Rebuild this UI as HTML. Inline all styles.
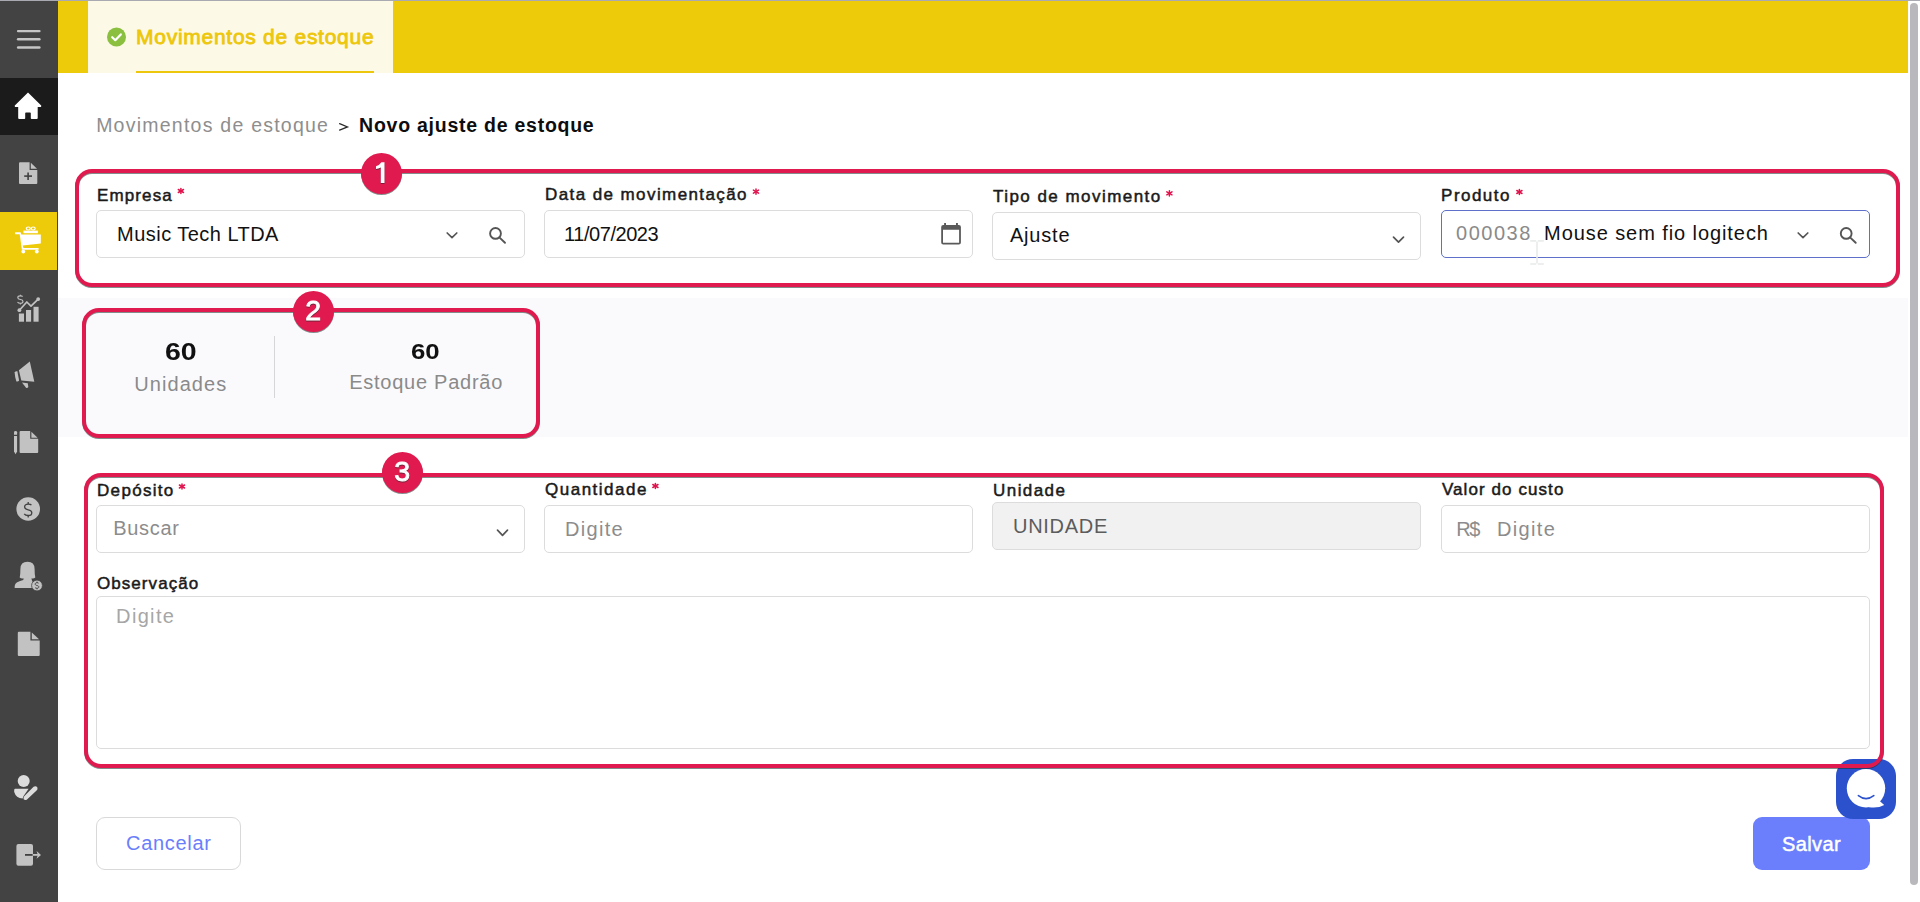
<!DOCTYPE html>
<html><head><meta charset="utf-8"><title>Novo ajuste de estoque</title>
<style>
html,body{margin:0;padding:0;width:1920px;height:902px;overflow:hidden;background:#fff;font-family:"Liberation Sans",sans-serif;}
.a{position:absolute;box-sizing:border-box;}
.t{position:absolute;white-space:nowrap;line-height:1;}
#topline{left:0;top:0;width:1920px;height:1px;background:#a9a9b1;}
#side{left:0;top:1px;width:58px;height:901px;background:#434343;}
#homebg{left:0;top:78px;width:58px;height:57px;background:#1b1b1b;}
#cartbg{left:0;top:212px;width:57px;height:58px;background:#eecb0a;}
#ybar{left:58px;top:1px;width:1850px;height:72px;background:#eecb0a;}
#tabbg{left:88px;top:1px;width:305px;height:72px;background:#fdf9e7;}
#tabline{left:136px;top:71px;width:238px;height:2px;background:#edc70b;}
#band{left:58px;top:298px;width:1850px;height:139px;background:#fafafd;}
.inp{position:absolute;box-sizing:border-box;border:1px solid #dcdcdc;border-radius:5px;background:#fff;}
.rbox{position:absolute;box-sizing:border-box;border:4px solid #e01a4f;border-radius:17px;}
.badge{position:absolute;box-sizing:border-box;width:41px;height:41px;border-radius:50%;background:#e01a4f;color:#fff;font-weight:700;font-size:28px;line-height:41px;text-align:center;}
.ann{position:absolute;left:0;top:0;width:1920px;height:902px;filter:drop-shadow(0 1px 0.7px rgba(30,50,45,0.55));}
#btn1{left:96px;top:817px;width:145px;height:53px;border:1px solid #d9d9d9;border-radius:9px;background:#fff;}
#btn2{left:1753px;top:817px;width:117px;height:53px;border-radius:9px;background:#6b7ffd;}
#chat{left:1836px;top:759px;width:60px;height:60px;border-radius:17px;background:#2b52cc;}
#thumb{left:1910px;top:3px;width:8px;height:882px;border-radius:4px;background:#b9b8bd;}
svg{position:absolute;overflow:visible;}

</style></head><body>
<div class="a" id="side"></div>
<div class="a" id="topline"></div>
<div class="a" id="homebg"></div>
<div class="a" id="cartbg"></div>
<div class="a" id="ybar"></div>
<div class="a" id="tabbg"></div>
<div class="a" id="tabline"></div>
<div class="a" id="band"></div>

<!-- sidebar icons -->
<svg style="left:0;top:0" width="58" height="902" viewBox="0 0 58 902">
 <g stroke="#c6c6c6" stroke-width="2.4" stroke-linecap="round">
  <line x1="18.1" y1="31.1" x2="39.4" y2="31.1"/>
  <line x1="18.1" y1="39.3" x2="39.4" y2="39.3"/>
  <line x1="18.1" y1="47.5" x2="39.4" y2="47.5"/>
 </g>
 <!-- home -->
 <path fill="#fff" d="M28 92.6 L41.2 105.4 Q41.6 106.2 40.8 107 L37.7 107 L37.7 118 Q37.7 119 36.7 119 L31.6 119 Q30.8 119 30.8 118.2 L30.8 113.2 Q30.8 112.5 30 112.5 L26 112.5 Q25.2 112.5 25.2 113.2 L25.2 118.2 Q25.2 119 24.4 119 L19.2 119 Q18.2 119 18.2 118 L18.2 107 L15.2 107 Q14.4 106.2 14.8 105.4 Z"/>
 <!-- doc plus -->
 <path fill="#c2c2c2" d="M20 162.3 L29.6 162.3 L29.6 169.9 L37.3 169.9 L37.3 183 Q37.3 184 36.3 184 L20 184 Q19 184 19 183 L19 163.3 Q19 162.3 20 162.3 Z"/>
 <path fill="#c2c2c2" d="M30.8 162.8 L37 168.8 L30.8 168.8 Z"/>
 <g stroke="#404040" stroke-width="1.6"><line x1="24.2" y1="176.1" x2="32" y2="176.1"/><line x1="28.1" y1="172.4" x2="28.1" y2="179.9"/></g>
 <!-- cart -->
 <g fill="#fff">
  <path d="M15.3 232.2 L20.6 232.2 L21.2 234.4 L40.8 234.4 L40.8 243.5 L22.7 245.6 L23.4 248 L38.6 248 L38.6 249.8 L21.9 249.8 L19.7 234.3 L15.3 234.2 Q14.6 233.2 15.3 232.2 Z"/>
  <rect x="23.5" y="230.6" width="14.4" height="2.6"/>
  <circle cx="23.3" cy="251.6" r="1.9"/><circle cx="36.8" cy="251.6" r="1.9"/>
 </g>
 <g fill="none" stroke="#fff" stroke-width="1.2"><ellipse cx="28.3" cy="228.5" rx="2" ry="1.5"/><ellipse cx="33.2" cy="228.5" rx="2" ry="1.5"/></g>
 <!-- chart -->
 <g fill="#c2c2c2">
  <rect x="18.9" y="313.5" width="5.1" height="8.2"/>
  <rect x="26" y="310" width="5.1" height="11.7"/>
  <rect x="33.5" y="306.8" width="5.1" height="14.9"/>
  <circle cx="19.4" cy="310.2" r="1.9"/><circle cx="38.2" cy="299.1" r="1.9"/>
 </g>
 <polyline points="19.4,310.2 26.8,302 31,306.2 38.2,299.1" fill="none" stroke="#c2c2c2" stroke-width="1.7" stroke-linejoin="round"/>
 <g fill="none" stroke="#c2c2c2" stroke-width="1.1" stroke-linecap="butt"><path d="M22.74 296.50 C22.22 295.85 21.70 295.85 20.40 295.85 C18.58 295.85 17.80 296.68 17.80 297.70 C17.80 298.90 18.84 299.27 20.40 299.55 C21.96 299.83 23.00 300.29 23.00 301.40 C23.00 302.51 22.22 303.25 20.40 303.25 C18.84 303.25 18.06 302.88 17.54 302.14"/><line x1="20.4" y1="294.65" x2="20.4" y2="295.85"/><line x1="20.4" y1="303.25" x2="20.4" y2="304.45"/></g>
 <!-- megaphone -->
 <g fill="#c2c2c2">
  <path d="M18.9 370.3 L29.8 361.6 L34.3 381.8 L21.3 380.4 Z"/>
  <path d="M14.6 372.6 Q15.4 370.8 17.4 371.2 L19.1 380.4 Q18.2 382 16.4 381.4 Q14.8 377 14.6 372.6 Z"/>
  <path d="M22 382.4 L27.8 383.2 L28.3 387 Q27.4 388.6 26 387.8 Z"/>
 </g>
 <!-- doc pencil -->
 <g fill="#c2c2c2">
  <path d="M20.6 431.1 L30.2 431.1 L30.2 438.8 L38.2 438.8 L38.2 452 Q38.2 453 37.2 453 L20.6 453 Q19.6 453 19.6 452 L19.6 432.1 Q19.6 431.1 20.6 431.1 Z"/>
  <path d="M31.4 431.8 L37.6 437.8 L31.4 437.8 Z"/>
  <path d="M14 432.3 Q14 430.9 15.5 430.9 Q17.1 430.9 17.1 432.3 L17.1 434.8 L14 434.8 Z"/>
  <path d="M14 436 L17.1 436 L17.1 451.5 L15.6 454.3 L14 451.5 Z"/>
 </g>
 <!-- dollar circle -->
 <circle cx="28.2" cy="509" r="11.8" fill="#c2c2c2"/>
 <g fill="none" stroke="#404040" stroke-width="1.3" stroke-linecap="butt"><path d="M31.44 505.10 C30.72 504.10 30.00 504.10 28.20 504.10 C25.68 504.10 24.60 505.38 24.60 506.95 C24.60 508.80 26.04 509.37 28.20 509.80 C30.36 510.23 31.80 510.94 31.80 512.65 C31.80 514.36 30.72 515.50 28.20 515.50 C26.04 515.50 24.96 514.93 24.24 513.79"/><line x1="28.2" y1="502.00" x2="28.2" y2="504.10"/><line x1="28.2" y1="515.50" x2="28.2" y2="517.60"/></g>
 <!-- woman -->
 <g fill="#c2c2c2">
  <path d="M27.5 561.8 Q34.6 561.8 34.6 569 Q34.6 575 35.3 577.6 Q33.6 579 31.5 578.3 L31.8 580 L32.6 582 Q35 583.5 36.5 585 L33.2 588 L14.7 588 Q14.3 584 16.8 582.5 Q20 580.8 23.3 580 L23.6 578.3 Q21.4 579 19.7 577.6 Q20.4 575 20.4 569 Q20.4 561.8 27.5 561.8 Z"/>
  <circle cx="37" cy="585.5" r="5.4" stroke="#404040" stroke-width="0.8"/>
 </g>
 <g fill="none" stroke="#404040" stroke-width="0.9" stroke-linecap="butt"><path d="M38.62 583.19 C38.26 582.70 37.90 582.70 37.00 582.70 C35.74 582.70 35.20 583.33 35.20 584.10 C35.20 585.01 35.92 585.29 37.00 585.50 C38.08 585.71 38.80 586.06 38.80 586.90 C38.80 587.74 38.26 588.30 37.00 588.30 C35.92 588.30 35.38 588.02 35.02 587.46"/><line x1="37" y1="581.60" x2="37" y2="582.70"/><line x1="37" y1="588.30" x2="37" y2="589.40"/></g>
 <!-- doc -->
 <path fill="#c2c2c2" d="M18.8 631.8 L30.4 631.8 L30.4 640.4 L39.7 640.4 L39.7 654.9 Q39.7 655.9 38.7 655.9 L18.8 655.9 Q17.8 655.9 17.8 654.9 L17.8 632.8 Q17.8 631.8 18.8 631.8 Z"/>
 <path fill="#c2c2c2" d="M31.8 632.6 L39 639.2 L31.8 639.2 Z"/>
 <!-- person pencil -->
 <g fill="#dcdcdc">
  <circle cx="23.7" cy="780.9" r="6"/>
  <path d="M15 788.8 L28.6 788.8 L23.6 796 L22.6 798.6 Q16 798 14.2 792 Q14 788.8 15 788.8 Z"/>
  <path d="M33.6 786.8 Q36 785.6 37.4 787.6 Q38 789.4 36.6 790.6 L27 799.4 Q25.4 800.6 23.8 799.6 Q23 798 24.2 796.2 Z"/>
 </g>
 <!-- logout -->
 <rect x="16.4" y="844.1" width="16.6" height="21.7" rx="2" fill="#c2c2c2"/>
 <line x1="25" y1="854.9" x2="32.8" y2="854.9" stroke="#404040" stroke-width="1.8"/>
 <line x1="32.8" y1="854.9" x2="38" y2="854.9" stroke="#c2c2c2" stroke-width="1.8"/>
 <path d="M36.6 851 L41 854.9 L36.6 858.8 L37.8 854.9 Z" fill="#c2c2c2"/>
</svg>

<!-- tab check icon -->
<svg style="left:0;top:0" width="400" height="80">
 <circle cx="116.5" cy="37" r="9.5" fill="#8bbf3f"/>
 <path d="M112.2 37.2 L115.3 40.2 L120.8 34.4" fill="none" stroke="#fff" stroke-width="2.2" stroke-linecap="round" stroke-linejoin="round"/>
</svg>

<!-- inputs -->
<div class="inp" style="left:96px;top:210px;width:429px;height:48px"></div>
<div class="inp" style="left:544px;top:210px;width:429px;height:48px"></div>
<div class="inp" style="left:992px;top:212px;width:429px;height:48px"></div>
<div class="inp" style="left:1441px;top:210px;width:429px;height:48px;border-color:#5e70c9"></div>
<div class="inp" style="left:96px;top:505px;width:429px;height:48px"></div>
<div class="inp" style="left:544px;top:505px;width:429px;height:48px"></div>
<div class="inp" style="left:992px;top:502px;width:429px;height:48px;background:#f1f1f1"></div>
<div class="inp" style="left:1441px;top:505px;width:429px;height:48px"></div>
<div class="inp" style="left:96px;top:596px;width:1774px;height:153px"></div>

<!-- divider -->
<div class="a" style="left:274px;top:336px;width:1px;height:62px;background:#d6d6d8"></div>

<!-- input icons -->
<svg style="left:0;top:0" width="1920" height="902">
 <g fill="none" stroke="#555" stroke-width="1.7" stroke-linecap="round" stroke-linejoin="round">
  <polyline points="447.2,233 452,237.6 456.8,233"/>
  <polyline points="1393.5,237.2 1398.5,242.2 1403.5,237.2"/>
  <polyline points="1798.2,233 1803,237.6 1807.8,233"/>
  <polyline points="497.5,530.2 502.5,535.3 507.5,530.2"/>
 </g>
 <g fill="none" stroke="#555" stroke-width="1.9" stroke-linecap="round">
  <circle cx="495.5" cy="233.4" r="5.4"/><line x1="499.6" y1="237.6" x2="505" y2="242.8"/>
  <circle cx="1846.2" cy="233.4" r="5.4"/><line x1="1850.3" y1="237.6" x2="1855.7" y2="242.8"/>
 </g>
 <!-- calendar -->
 <path fill="#5a5a5a" fill-rule="evenodd" d="M943.2 225 L958.9 225 Q960.9 225 960.9 227 L960.9 242.6 Q960.9 244.6 958.9 244.6 L943.2 244.6 Q941.2 244.6 941.2 242.6 L941.2 227 Q941.2 225 943.2 225 Z M943 229.8 L943 242.8 L959.1 242.8 L959.1 229.8 Z"/>
 <rect x="944.1" y="223" width="1.9" height="2.5" fill="#5a5a5a"/>
 <rect x="956" y="223" width="1.9" height="2.5" fill="#5a5a5a"/>
 <!-- I-beam cursor -->
 <g stroke="#e9ebeb" stroke-width="1.6" fill="none">
  <line x1="1537" y1="241.5" x2="1537" y2="263.5"/>
  <line x1="1530.2" y1="240.9" x2="1536.2" y2="240.9"/><line x1="1537.8" y1="240.9" x2="1543.8" y2="240.9"/>
  <line x1="1530.2" y1="264" x2="1536.2" y2="264"/><line x1="1537.8" y1="264" x2="1543.8" y2="264"/>
 </g>
</svg>

<svg style="left:0;top:0" width="1920" height="902"><g stroke="#e0134d" stroke-width="1.5" stroke-linecap="round">
 <line x1="180.9" y1="188.4" x2="180.9" y2="193.6"/><line x1="178.3" y1="189.5" x2="183.5" y2="192.5"/><line x1="178.3" y1="192.5" x2="183.5" y2="189.5"/>
 <line x1="756" y1="189.0" x2="756" y2="194.2"/><line x1="753.4" y1="190.1" x2="758.6" y2="193.1"/><line x1="753.4" y1="193.1" x2="758.6" y2="190.1"/>
 <line x1="1169.4" y1="190.70000000000002" x2="1169.4" y2="195.9"/><line x1="1166.8000000000002" y1="191.8" x2="1172.0" y2="194.8"/><line x1="1166.8000000000002" y1="194.8" x2="1172.0" y2="191.8"/>
 <line x1="1519.4" y1="189.4" x2="1519.4" y2="194.6"/><line x1="1516.8000000000002" y1="190.5" x2="1522.0" y2="193.5"/><line x1="1516.8000000000002" y1="193.5" x2="1522.0" y2="190.5"/>
 <line x1="182" y1="483.9" x2="182" y2="489.1"/><line x1="179.4" y1="485.0" x2="184.6" y2="488.0"/><line x1="179.4" y1="488.0" x2="184.6" y2="485.0"/>
 <line x1="655.4" y1="483.4" x2="655.4" y2="488.6"/><line x1="652.8" y1="484.5" x2="658.0" y2="487.5"/><line x1="652.8" y1="487.5" x2="658.0" y2="484.5"/>
</g></svg>
<svg style="left:0;top:0" width="400" height="150"><polyline points="339.6,123.7 347.5,126.9 339.6,130.1" fill="none" stroke="#2a2a2a" stroke-width="1.25" stroke-linecap="round" stroke-linejoin="miter"/></svg>
<!-- buttons -->
<div class="a" id="btn1"></div>
<div class="a" id="btn2"></div>
<div class="a" id="chat"></div>
<svg style="left:0;top:0" width="1920" height="902">
 <circle cx="1866" cy="788.3" r="19.2" fill="#fff"/>
 <path fill="#fff" d="M1878.6 800 L1884.2 805 Q1878 808.6 1869 807.2 Z"/>
 <path d="M1858.4 795.6 Q1866 801.6 1873.8 795.6" fill="none" stroke="#2b52cc" stroke-width="1.6" stroke-linecap="round"/>
</svg>
<div class="a" id="thumb"></div>

<!-- annotations -->
<div class="ann">
 <div class="rbox" style="left:75px;top:169px;width:1825px;height:118px"></div>
 <div class="rbox" style="left:82px;top:308px;width:458px;height:130px"></div>
 <div class="rbox" style="left:84px;top:473px;width:1800px;height:295px"></div>
 <div class="badge" style="left:361px;top:153px"></div>
 <div class="badge" style="left:293px;top:291px"></div>
 <div class="badge" style="left:382px;top:452px"></div>
 <svg style="left:0;top:0;filter:drop-shadow(0 1px 0.5px rgba(30,40,40,0.55))" width="1920" height="902">
  <path fill="#fff" d="M384.5 162.3 L384.5 182.9 L380.8 182.9 L380.8 167.4 Q378.6 168.6 376 168.9 L376 166.2 Q379.6 165.2 381.4 162.3 Z"/>
  <text x="313.2" y="320.2" text-anchor="middle" font-family="Liberation Sans" font-size="28.5" fill="#fff" stroke="#fff" stroke-width="0.9">2</text>
  <text x="402.2" y="481.1" text-anchor="middle" font-family="Liberation Sans" font-size="28.5" fill="#fff" stroke="#fff" stroke-width="0.9">3</text>
 </svg>
</div>

<div class="t" id="tab" style="left:136.03px;top:26.42px;font-size:21px;font-weight:400;color:#edc70b;letter-spacing:0.730px;-webkit-text-stroke:0.85px #edc70b">Movimentos de estoque</div>
<div class="t" id="bc1" style="left:96.14px;top:116.19px;font-size:19.5px;font-weight:400;color:#8e8e8e;letter-spacing:1.240px">Movimentos de estoque</div>
<div class="t" id="bc3" style="left:359.05px;top:115.99px;font-size:19.5px;font-weight:700;color:#0d0d0d;letter-spacing:0.752px">Novo ajuste de estoque</div>
<div class="t" id="l1" style="left:97.00px;top:187.01px;font-size:17px;font-weight:400;color:#1a1a1a;letter-spacing:1.117px;-webkit-text-stroke:0.5px #1a1a1a">Empresa</div>
<div class="t" id="l2" style="left:545.06px;top:186.41px;font-size:17px;font-weight:400;color:#1a1a1a;letter-spacing:1.405px;-webkit-text-stroke:0.5px #1a1a1a">Data de movimentação</div>
<div class="t" id="l3" style="left:992.98px;top:188.01px;font-size:17px;font-weight:400;color:#1a1a1a;letter-spacing:1.456px;-webkit-text-stroke:0.5px #1a1a1a">Tipo de movimento</div>
<div class="t" id="l4" style="left:1441.08px;top:186.61px;font-size:17px;font-weight:400;color:#1a1a1a;letter-spacing:1.467px;-webkit-text-stroke:0.5px #1a1a1a">Produto</div>
<div class="t" id="v1" style="left:117.10px;top:223.97px;font-size:20px;font-weight:400;color:#111111;letter-spacing:0.464px">Music Tech LTDA</div>
<div class="t" id="v2" style="left:564.10px;top:224.07px;font-size:20px;font-weight:400;color:#111111;letter-spacing:-0.456px">11/07/2023</div>
<div class="t" id="v3" style="left:1009.94px;top:225.27px;font-size:20px;font-weight:400;color:#111111;letter-spacing:0.820px">Ajuste</div>
<div class="t" id="v4" style="left:1456.08px;top:222.97px;font-size:20px;font-weight:400;color:#8a8a8a;letter-spacing:1.500px">000038</div>
<div class="t" id="v5" style="left:1544.09px;top:223.37px;font-size:20px;font-weight:400;color:#111111;letter-spacing:0.919px">Mouse sem fio logitech</div>
<div class="t" id="s1" style="left:164.88px;top:340.74px;font-size:23.7px;font-weight:700;color:#111111;letter-spacing:0.000px;transform:scaleX(1.2043);transform-origin:0 0">60</div>
<div class="t" id="s2" style="left:134.17px;top:373.97px;font-size:20px;font-weight:400;color:#8a8a8a;letter-spacing:1.086px">Unidades</div>
<div class="t" id="s3" style="left:410.54px;top:340.92px;font-size:22.3px;font-weight:700;color:#111111;letter-spacing:0.000px;transform:scaleX(1.1561);transform-origin:0 0">60</div>
<div class="t" id="s4" style="left:349.14px;top:372.17px;font-size:20px;font-weight:400;color:#8a8a8a;letter-spacing:0.754px">Estoque Padrão</div>
<div class="t" id="l5" style="left:97.04px;top:481.61px;font-size:17px;font-weight:400;color:#1a1a1a;letter-spacing:1.314px;-webkit-text-stroke:0.5px #1a1a1a">Depósito</div>
<div class="t" id="l6" style="left:545.02px;top:481.21px;font-size:17px;font-weight:400;color:#1a1a1a;letter-spacing:1.500px;-webkit-text-stroke:0.5px #1a1a1a">Quantidade</div>
<div class="t" id="l7" style="left:993.08px;top:481.61px;font-size:17px;font-weight:400;color:#1a1a1a;letter-spacing:1.417px;-webkit-text-stroke:0.5px #1a1a1a">Unidade</div>
<div class="t" id="l8" style="left:1441.93px;top:481.41px;font-size:17px;font-weight:400;color:#1a1a1a;letter-spacing:1.077px;-webkit-text-stroke:0.5px #1a1a1a">Valor do custo</div>
<div class="t" id="l9" style="left:96.97px;top:575.41px;font-size:17px;font-weight:400;color:#1a1a1a;letter-spacing:1.067px;-webkit-text-stroke:0.5px #1a1a1a">Observação</div>
<div class="t" id="p1" style="left:113.13px;top:518.17px;font-size:20px;font-weight:400;color:#8c8c8c;letter-spacing:0.700px">Buscar</div>
<div class="t" id="p2" style="left:565.10px;top:518.67px;font-size:20px;font-weight:400;color:#8c8c8c;letter-spacing:1.300px">Digite</div>
<div class="t" id="p3" style="left:1013.09px;top:516.07px;font-size:20px;font-weight:400;color:#5c5c5c;letter-spacing:0.700px">UNIDADE</div>
<div class="t" id="p4" style="left:1456.17px;top:519.27px;font-size:20px;font-weight:400;color:#8c8c8c;letter-spacing:-1.300px">R$</div>
<div class="t" id="p5" style="left:1497.08px;top:519.27px;font-size:20px;font-weight:400;color:#8c8c8c;letter-spacing:1.320px">Digite</div>
<div class="t" id="p6" style="left:116.10px;top:606.17px;font-size:20px;font-weight:400;color:#a6a6a6;letter-spacing:1.340px">Digite</div>
<div class="t" id="b1" style="left:126.09px;top:833.17px;font-size:20px;font-weight:400;color:#6a7efc;letter-spacing:0.686px">Cancelar</div>
<div class="t" id="b2" style="left:1782.05px;top:833.57px;font-size:20px;font-weight:400;color:#ffffff;letter-spacing:0.360px;-webkit-text-stroke:0.45px #ffffff">Salvar</div>
</body></html>
